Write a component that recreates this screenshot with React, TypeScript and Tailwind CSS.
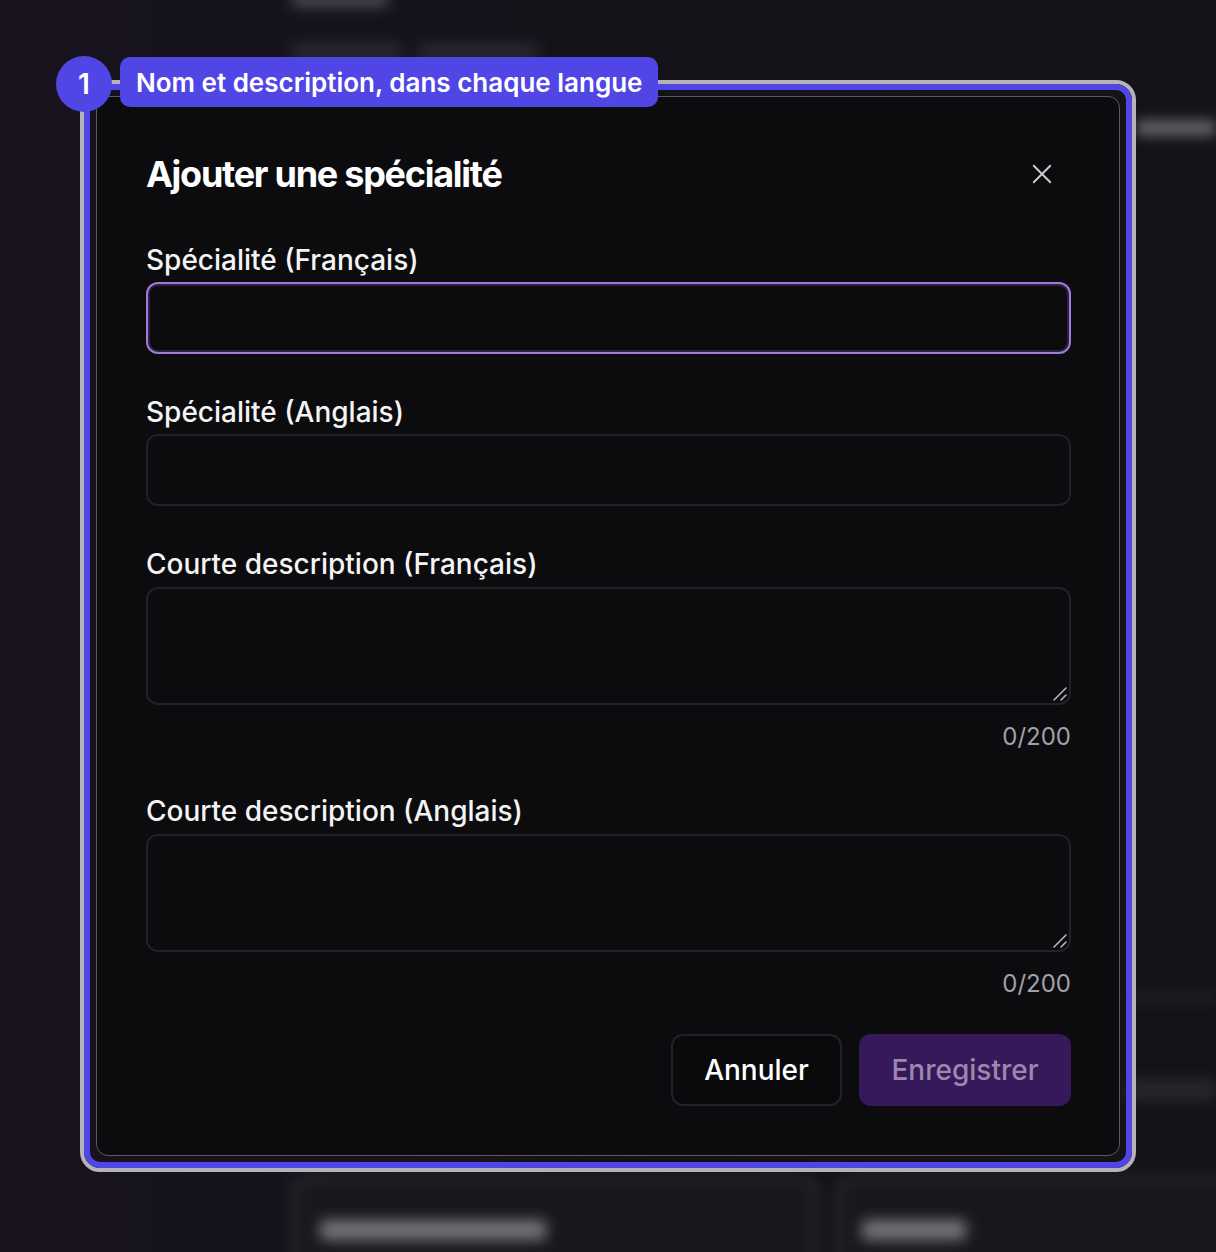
import React from "react";

const font = { fontFamily: "Inter, 'Noto Sans', sans-serif" };

function ResizeGrip() {
  return (
    <svg
      className="absolute right-[3px] bottom-[3px]"
      width="16"
      height="16"
      viewBox="0 0 16 16"
      fill="none"
      stroke="#b5b5b8"
      strokeWidth="1.6"
      strokeLinecap="round"
    >
      <line x1="2" y1="14" x2="14" y2="2" />
      <line x1="9" y1="14" x2="14" y2="9" />
    </svg>
  );
}

function Field({
  label,
  focused,
  multiline,
  className,
}: {
  label: string;
  focused?: boolean;
  multiline?: boolean;
  className?: string;
}) {
  return (
    <div className={className}>
      <div className="text-[28px] leading-[28px] font-medium text-[#f4f4f5]">{label}</div>
      {multiline ? (
        <div className="relative mt-[9px]">
          <textarea className="block w-full h-[118px] resize-none rounded-[12px] border-2 border-[#222226] bg-[#0c0c0f] outline-none" />
          <ResizeGrip />
        </div>
      ) : (
        <input
          className={`mt-[8px] block w-full h-[72px] rounded-[12px] border-2 bg-[#0c0c0f] outline-none ${
            focused
              ? "border-[#a27bd8] shadow-[inset_0_0_0_2px_rgba(110,70,160,0.35)]"
              : "border-[#222226]"
          }`}
        />
      )}
      {multiline && (
        <div className="mt-[20px] text-right text-[24px] leading-[24px] text-[#a1a1aa]">0/200</div>
      )}
    </div>
  );
}

// blurred page behind the modal
function Backdrop() {
  return (
    <div className="absolute inset-0 flex flex-col blur-[7px]">
      <div className="shrink-0 pl-[292px] flex flex-col gap-[38px] -mt-[6px]">
        <div className="w-[96px] h-[12px] rounded bg-[#55545b]" />
        <div className="flex gap-[16px]">
          <div className="w-[110px] h-[14px] rounded bg-[#2c2b32]" />
          <div className="w-[120px] h-[14px] rounded bg-[#2c2b32]" />
        </div>
      </div>
      <div className="shrink-0 mt-[63px] flex justify-end">
        <div className="w-[80px] h-[14px] rounded bg-[#6e6d74]" />
      </div>
      <div className="shrink-0 mt-[860px] flex flex-col items-end gap-[78px]">
        <div className="w-[90px] h-[6px] bg-[#2a292f]" />
        <div className="w-[90px] h-[22px] bg-[#27262c]" />
      </div>
      <div className="shrink-0 mt-[75px] pl-[292px] flex gap-[18px]">
        <div className="shrink-0 w-[526px] h-[120px] rounded-[14px] border-[6px] border-[#2c2b31] bg-[#18171c] px-[22px] pt-[38px]">
          <div className="w-[226px] h-[20px] rounded bg-[#76757b]" />
        </div>
        <div className="shrink-0 w-[420px] h-[120px] rounded-[14px] border-[6px] border-[#2c2b31] bg-[#18171c] px-[20px] pt-[38px]">
          <div className="w-[104px] h-[20px] rounded bg-[#76757b]" />
        </div>
      </div>
    </div>
  );
}

export default function App() {
  return (
    <div
      className="relative w-[1216px] h-[1252px] overflow-hidden bg-gradient-to-r from-[#18131f] via-[#141219] to-[#141317]"
      style={font}
    >
      <Backdrop />

      <div className="relative pl-[80px] pt-[80px]">
        <div className="w-[1056px] h-[1092px] rounded-[20px] border-4 border-[#b4b4b8]">
          <div className="h-full rounded-[16px] border-[6px] border-[#5046e5] p-[6px]">
            <div className="h-full rounded-[12px] border border-[#5c5c60] bg-[#0c0c0f] pl-[49px] pr-[48px] pt-[48px]">
              <div className="flex items-center justify-between h-[58px]">
                <h2 className="text-[36px] leading-[40px] font-bold tracking-[-0.035em] text-white">
                  Ajouter une spécialité
                </h2>
                <svg
                  width="22"
                  height="22"
                  viewBox="0 0 24 24"
                  fill="none"
                  stroke="#d0d0d4"
                  strokeWidth="2"
                  strokeLinecap="round"
                  className="mr-[18px]"
                >
                  <path d="M3 3L21 21M21 3L3 21" />
                </svg>
              </div>

              <Field label="Spécialité (Français)" focused className="mt-[43px]" />
              <Field label="Spécialité (Anglais)" className="mt-[44px]" />
              <Field label="Courte description (Français)" multiline className="mt-[44px]" />
              <Field label="Courte description (Anglais)" multiline className="mt-[48px]" />

              <div className="mt-[38px] flex justify-end gap-[17px]">
                <button className="h-[72px] w-[171px] rounded-[12px] border-2 border-[#232327] bg-[#0a0a0c] text-[28px] font-medium text-white">
                  Annuler
                </button>
                <button className="h-[72px] w-[212px] rounded-[12px] bg-[#35195a] text-[28px] font-medium text-[#9a88ad]">
                  Enregistrer
                </button>
              </div>
            </div>
          </div>
        </div>
      </div>

      <div className="absolute left-[56px] top-[56px] flex items-center gap-[8px]">
        <div className="w-[56px] h-[56px] rounded-full bg-[#5046e5] flex items-center justify-center text-[28px] font-semibold text-white">
          1
        </div>
        <div className="h-[50px] mt-[-4px] rounded-[10px] bg-[#5046e5] px-[16px] flex items-center text-[26px] font-semibold text-white">
          Nom et description, dans chaque langue
        </div>
      </div>
    </div>
  );
}
